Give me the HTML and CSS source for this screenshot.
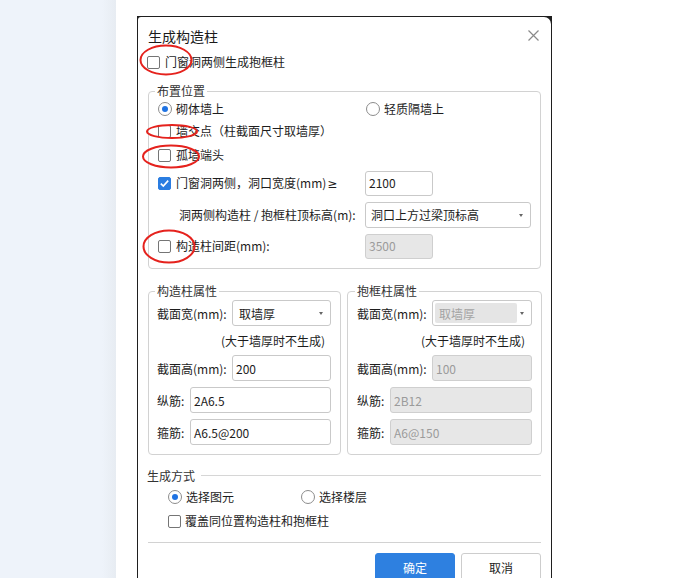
FILE: index.html
```html
<!DOCTYPE html>
<html lang="zh-CN">
<head>
<meta charset="utf-8">
<title>生成构造柱</title>
<link rel="stylesheet" href="styles.css">
</head>
<body>
<div class="page">
  <aside class="side"></aside>
  <main class="stage">
    <div class="frame">
      <div class="dialog">
        <div class="title-bar">
          <span class="title">生成构造柱</span>
          <span class="close"><svg width="11" height="11" viewBox="0 0 11 11"><path d="M0.5 0.5L10.5 10.5M10.5 0.5L0.5 10.5" stroke="#8a8a8a" stroke-width="1.2" fill="none"/></svg></span>
        </div>

        <div class="line-row top-row"><span class="cb"></span><span>门窗洞两侧生成抱框柱</span></div>

        <fieldset class="group g-place">
          <legend>布置位置</legend>
          <div class="line-row r1">
            <span class="col-a"><span class="rb on"></span><span>砌体墙上</span></span>
            <span class="opt"><span class="rb"></span><span>轻质隔墙上</span></span>
          </div>
          <div class="line-row r2"><span class="cb"></span><span>墙交点（柱截面尺寸取墙厚）</span></div>
          <div class="line-row r3"><span class="cb"></span><span>孤墙端头</span></div>
          <div class="line-row r4">
            <span class="col-a"><span class="cb checked"><svg width="13" height="13" viewBox="0 0 13 13"><path d="M2.8 6.6L5.3 9.1L10.2 3.6" stroke="#fff" stroke-width="1.6" fill="none"/></svg></span><span>门窗洞两侧，洞口宽度(mm)<span class="ge">≥</span></span></span>
            <span class="input w-short">2100</span>
          </div>
          <div class="line-row r5">
            <span class="col-a indent">洞两侧构造柱 / 抱框柱顶标高(m):</span>
            <span class="select w-long"><span class="sel-text">洞口上方过梁顶标高</span><span class="caret"></span></span>
          </div>
          <div class="line-row r6">
            <span class="col-a"><span class="cb"></span><span>构造柱间距(mm):</span></span>
            <span class="input w-short disabled">3500</span>
          </div>
        </fieldset>

        <div class="pair">
          <fieldset class="group g-left">
            <legend>构造柱属性</legend>
            <div class="prop-row first"><span class="lab wide">截面宽(mm):</span><span class="select grow"><span class="sel-text">取墙厚</span><span class="caret"></span></span></div>
            <div class="note-row">(大于墙厚时不生成)</div>
            <div class="prop-row"><span class="lab wide">截面高(mm):</span><span class="input grow">200</span></div>
            <div class="prop-row gap"><span class="lab">纵筋:</span><span class="input grow">2A6.5</span></div>
            <div class="prop-row gap"><span class="lab">箍筋:</span><span class="input grow">A6.5@200</span></div>
          </fieldset>
          <fieldset class="group g-right">
            <legend>抱框柱属性</legend>
            <div class="prop-row first"><span class="lab wide">截面宽(mm):</span><span class="select grow sel-disabled"><span class="sel-inner">取墙厚</span><span class="caret"></span></span></div>
            <div class="note-row">(大于墙厚时不生成)</div>
            <div class="prop-row"><span class="lab wide">截面高(mm):</span><span class="input grow disabled">100</span></div>
            <div class="prop-row gap"><span class="lab">纵筋:</span><span class="input grow disabled">2B12</span></div>
            <div class="prop-row gap"><span class="lab">箍筋:</span><span class="input grow disabled">A6@150</span></div>
          </fieldset>
        </div>

        <div class="section-head"><span>生成方式</span><span class="rule"></span></div>
        <div class="line-row mode-row">
          <span class="mode-a"><span class="rb on"></span><span>选择图元</span></span>
          <span class="opt"><span class="rb"></span><span>选择楼层</span></span>
        </div>
        <div class="line-row cover-row"><span class="cb"></span><span>覆盖同位置构造柱和抱框柱</span></div>

        <div class="divider"></div>
        <div class="buttons">
          <span class="btn primary">确定</span>
          <span class="btn">取消</span>
        </div>
      </div>
    </div>
  </main>
  <svg class="marks" width="695" height="578" viewBox="0 0 695 578">
    <ellipse cx="166" cy="60" rx="25.5" ry="14.5" />
    <ellipse cx="172" cy="131.5" rx="25" ry="6.5" />
    <ellipse cx="171" cy="156.5" rx="28" ry="11" />
    <ellipse cx="169" cy="246.5" rx="25.5" ry="16" />
  </svg>
</div>
</body>
</html>
```

FILE: styles.css
```css
* { box-sizing: border-box; }
html, body { margin: 0; padding: 0; }
body {
  font-family: "Noto Sans CJK SC", "Microsoft YaHei", sans-serif;
  font-size: 12px;
  color: #1d1d1d;
  background: #fff;
}
.page {
  position: relative;
  display: flex;
  width: 695px;
  height: 578px;
  overflow: hidden;
}
.side {
  width: 116px;
  flex: none;
  background: linear-gradient(to right, #eef3fa 0, #eef3fa 88%, #e7ecf2 100%);
}
.stage {
  flex: 1;
  padding: 16px 0 0 21px;
  background: #fff;
}
.frame {
  width: 415px;
  height: 580px;
  background: #1f1f1f;
  padding: 1px 1px 0 1px;
}
.dialog {
  height: 100%;
  background: #fff;
  border-radius: 3px 7px 0 0;
  padding: 0 10px;
}
.title-bar {
  height: 33px;
  padding-top: 4px;
  display: flex;
  align-items: center;
  justify-content: space-between;
}
.title { font-size: 14px; line-height: 20px; color: #1a1a1a; }
.close { display: flex; margin-right: 2px; }

.line-row {
  display: flex;
  align-items: center;
  line-height: 16px;
}
.top-row { height: 24px; margin-left: -1px; }
.top-row .cb { margin-right: 5px; }

.cb {
  width: 13px;
  height: 13px;
  border: 1px solid #757575;
  border-radius: 2px;
  margin-right: 5px;
  flex: none;
  background: #fff;
  display: flex;
}
.cb.checked { background: #2a7de1; border-color: #2a7de1; }
.cb.checked svg { margin: -1px; }
.ge { font-family: "Noto Sans", "DejaVu Sans", sans-serif; margin-left: 1px; }
.rb {
  width: 14px;
  height: 14px;
  border: 1px solid #8c8c8c;
  border-radius: 50%;
  margin-right: 4px;
  flex: none;
  display: flex;
  align-items: center;
  justify-content: center;
}
.rb.on::after {
  content: "";
  width: 6px;
  height: 6px;
  border-radius: 50%;
  background: #1f73e3;
}

.group {
  margin: 0;
  border: 1px solid #d2d2d2;
  border-radius: 4px;
  min-width: 0;
}
.group legend {
  padding: 0 2px;
  line-height: 16px;
  font-size: 12px;
  color: #333;
}
.g-place {
  margin-top: 9px;
  padding: 0 9px 9px 9px;
}
.g-place legend { margin-left: -3px; }
.col-a { width: 207px; flex: none; display: flex; align-items: center; }
.r1 { height: 20px; }
.r1 .col-a { width: 208px; }
.r2, .r3 { height: 24px; }
.r4 { height: 26px; margin-top: 3px; }
.r5 { height: 26px; margin-top: 6px; }
.r6 { height: 26px; margin-top: 5px; }
.indent { padding-left: 21px; }
.opt { display: flex; align-items: center; }

.input, .select {
  height: 25px;
  border: 1px solid #c9c9c9;
  border-radius: 3px;
  background: #fff;
  display: flex;
  align-items: center;
  padding: 0 3px;
  color: #1d1d1d;
  font-family: "Noto Sans CJK SC", "Microsoft YaHei", sans-serif;
}
.input.disabled { background: #e7e7e7; border-color: #cfcfcf; color: #9b9b9b; }
.w-short { width: 68px; }
.w-long { width: 166px; height: 26px; }
.select { justify-content: space-between; padding: 0 7px 0 5px; }
.caret {
  width: 0;
  height: 0;
  border-left: 2.5px solid transparent;
  border-right: 2.5px solid transparent;
  border-top: 3px solid #666;
  flex: none;
}

.pair {
  display: flex;
  gap: 6px;
  margin-top: 14px;
}
.g-left { width: 193px; padding: 0 9px 9px 8px; flex: none; }
.g-right { width: 195px; padding: 0 9px 9px 9px; flex: none; }
.g-left legend, .g-right legend { margin-left: -2px; }
.prop-row {
  display: flex;
  align-items: center;
  height: 26px;
}
.prop-row.first { margin-top: 1px; }
.prop-row.gap { margin-top: 6px; }
.prop-row .input, .prop-row .select { height: 26px; }
.lab { width: 33px; flex: none; white-space: nowrap; }
.lab.wide { width: 75px; }
.grow { flex: 1; min-width: 0; }
.prop-row .select { padding: 0 7px 0 6px; }
.note-row {
  height: 29px;
  display: flex;
  align-items: center;
  justify-content: flex-end;
  padding-right: 6px;
}
.g-right .note-row { padding-right: 7px; }
.sel-disabled { padding: 0 7px 0 2px !important; }
.sel-inner {
  width: 82px;
  height: 20px;
  background: #e5e5e5;
  border-radius: 2px;
  color: #a3a3a3;
  display: flex;
  align-items: center;
  padding-left: 4px;
}

.section-head {
  margin-top: 10px;
  height: 20px;
  display: flex;
  align-items: center;
  margin-left: -1px;
  color: #333;
}
.section-head .rule {
  flex: 1;
  height: 1px;
  background: #d6d6d6;
  margin-left: 6px;
}
.mode-row { height: 20px; margin-top: 2px; padding-left: 20px; }
.mode-a { width: 133px; display: flex; align-items: center; }
.cover-row { height: 22px; margin-top: 3px; padding-left: 20px; }
.cover-row .cb { margin-right: 4px; }
.divider {
  margin-top: 10px;
  height: 1px;
  background: #d2d2d2;
}
.buttons {
  margin-top: 10px;
  display: flex;
  justify-content: flex-end;
  gap: 6px;
}
.btn {
  width: 80px;
  height: 28px;
  border: 1px solid #cdcdcd;
  border-radius: 3px;
  display: flex;
  align-items: center;
  justify-content: center;
  background: #fff;
  color: #1d1d1d;
}
.btn.primary {
  background: #2e80e0;
  border-color: #2e80e0;
  color: #fff;
}

.marks {
  position: absolute;
  left: 0;
  top: 0;
  pointer-events: none;
}
.marks ellipse {
  fill: none;
  stroke: #e5221d;
  stroke-width: 2;
}
```
